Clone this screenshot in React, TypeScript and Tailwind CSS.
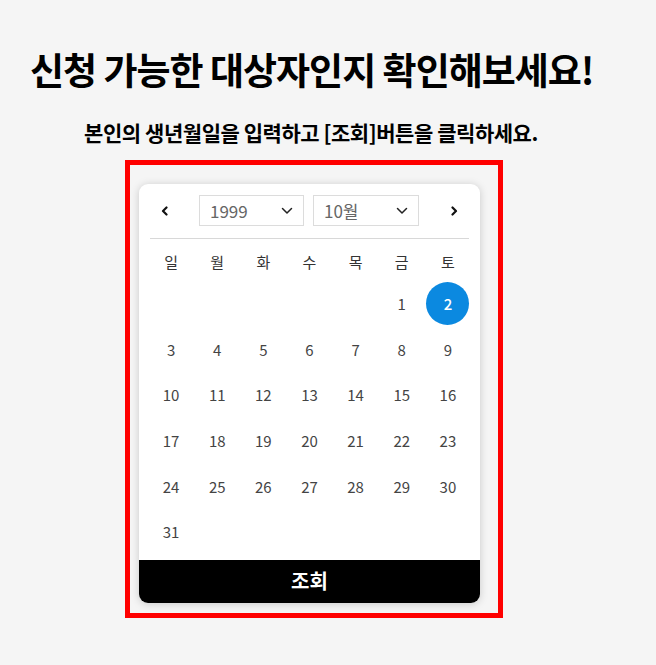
import React from "react";

const FONT = { fontFamily: '"Noto Sans CJK KR", "Noto Sans", sans-serif' };

const DAY_NAMES = ["일", "월", "화", "수", "목", "금", "토"];

// October 1999 starts on a Friday
const cells: (number | null)[] = [
  null, null, null, null, null, 1, 2,
  ...Array.from({ length: 29 }, (_, i) => i + 3),
];

function Chevron({ dir }: { dir: "left" | "right" }) {
  return (
    <svg width="8" height="10" viewBox="0 0 8 10" fill="none">
      <path
        d={dir === "left" ? "M5.5 1.5 L2 5 L5.5 8.5" : "M2.5 1.5 L6 5 L2.5 8.5"}
        stroke="#111"
        strokeWidth="2.2"
        strokeLinecap="round"
        strokeLinejoin="round"
      />
    </svg>
  );
}

function SmallCaret() {
  return (
    <svg width="12" height="8" viewBox="0 0 12 8" fill="none">
      <path d="M1.5 1.5 L6 6 L10.5 1.5" stroke="#222" strokeWidth="1.5" strokeLinecap="round" strokeLinejoin="round" />
    </svg>
  );
}

function Select({ value, width }: { value: string; width: string }) {
  return (
    <div
      className={`flex h-[31px] items-center justify-between border border-[#dcdcdc] bg-white pl-[10px] pr-[10px] ${width}`}
    >
      <span className="text-[17px] leading-none text-[#666]">{value}</span>
      <SmallCaret />
    </div>
  );
}

export default function App() {
  return (
    <div className="min-h-[665px] w-full bg-[#f5f5f5]" style={FONT}>
      <div className="w-[656px] pt-[44px]">
        <h1 className="pl-[30px] text-[37px] font-bold leading-[50px] tracking-[-1px] text-black">
          신청 가능한 대상자인지 확인해보세요!
        </h1>
        <p className="mt-[23px] w-[622px] text-center text-[21px] font-bold leading-[30px] tracking-[-0.45px] text-black">
          본인의 생년월일을 입력하고 [조회]버튼을 클릭하세요.
        </p>

        <div className="ml-[125px] mt-[13px] w-[378px] border-[5px] border-[#ff0000] pb-[10px] pl-[9px] pr-[18px] pt-[19px]">
          <div className="overflow-hidden rounded-[9px] bg-white shadow-[0_1px_8px_rgba(0,0,0,0.18)]">
            {/* month navigation */}
            <div className="flex items-center px-[11px] pt-[11px]">
              <div className="flex w-[49px] justify-start pl-[11px]">
                <Chevron dir="left" />
              </div>
              <Select value="1999" width="w-[105px]" />
              <div className="w-[9px]" />
              <Select value="10월" width="w-[106px]" />
              <div className="flex w-[50px] justify-end pr-[11px]">
                <Chevron dir="right" />
              </div>
            </div>
            <div className="mx-[11px] mt-[12px] h-px bg-[#d8d8d8]" />

            {/* weekday header */}
            <div className="mx-[9px] grid h-[42px] grid-cols-7 items-center pt-[2px]">
              {DAY_NAMES.map((d) => (
                <div key={d} className="text-center text-[15px] leading-none text-[#333]">
                  {d}
                </div>
              ))}
            </div>

            {/* days */}
            <div className="mx-[9px] grid grid-cols-7 auto-rows-[45.6px]">
              {cells.map((n, i) => (
                <div key={i} className="flex items-center justify-center">
                  {n === 2 ? (
                    <div className="flex h-[43px] w-[43px] items-center justify-center rounded-full bg-[#0b89e0] text-[15px] font-medium text-white">
                      {n}
                    </div>
                  ) : (
                    <span className="text-[15px] leading-none text-[#444]">{n ?? ""}</span>
                  )}
                </div>
              ))}
            </div>

            <button className="mt-[5px] flex h-[43px] w-full items-center justify-center bg-black text-[20px] font-bold text-white">
              조회
            </button>
          </div>
        </div>
      </div>
    </div>
  );
}
